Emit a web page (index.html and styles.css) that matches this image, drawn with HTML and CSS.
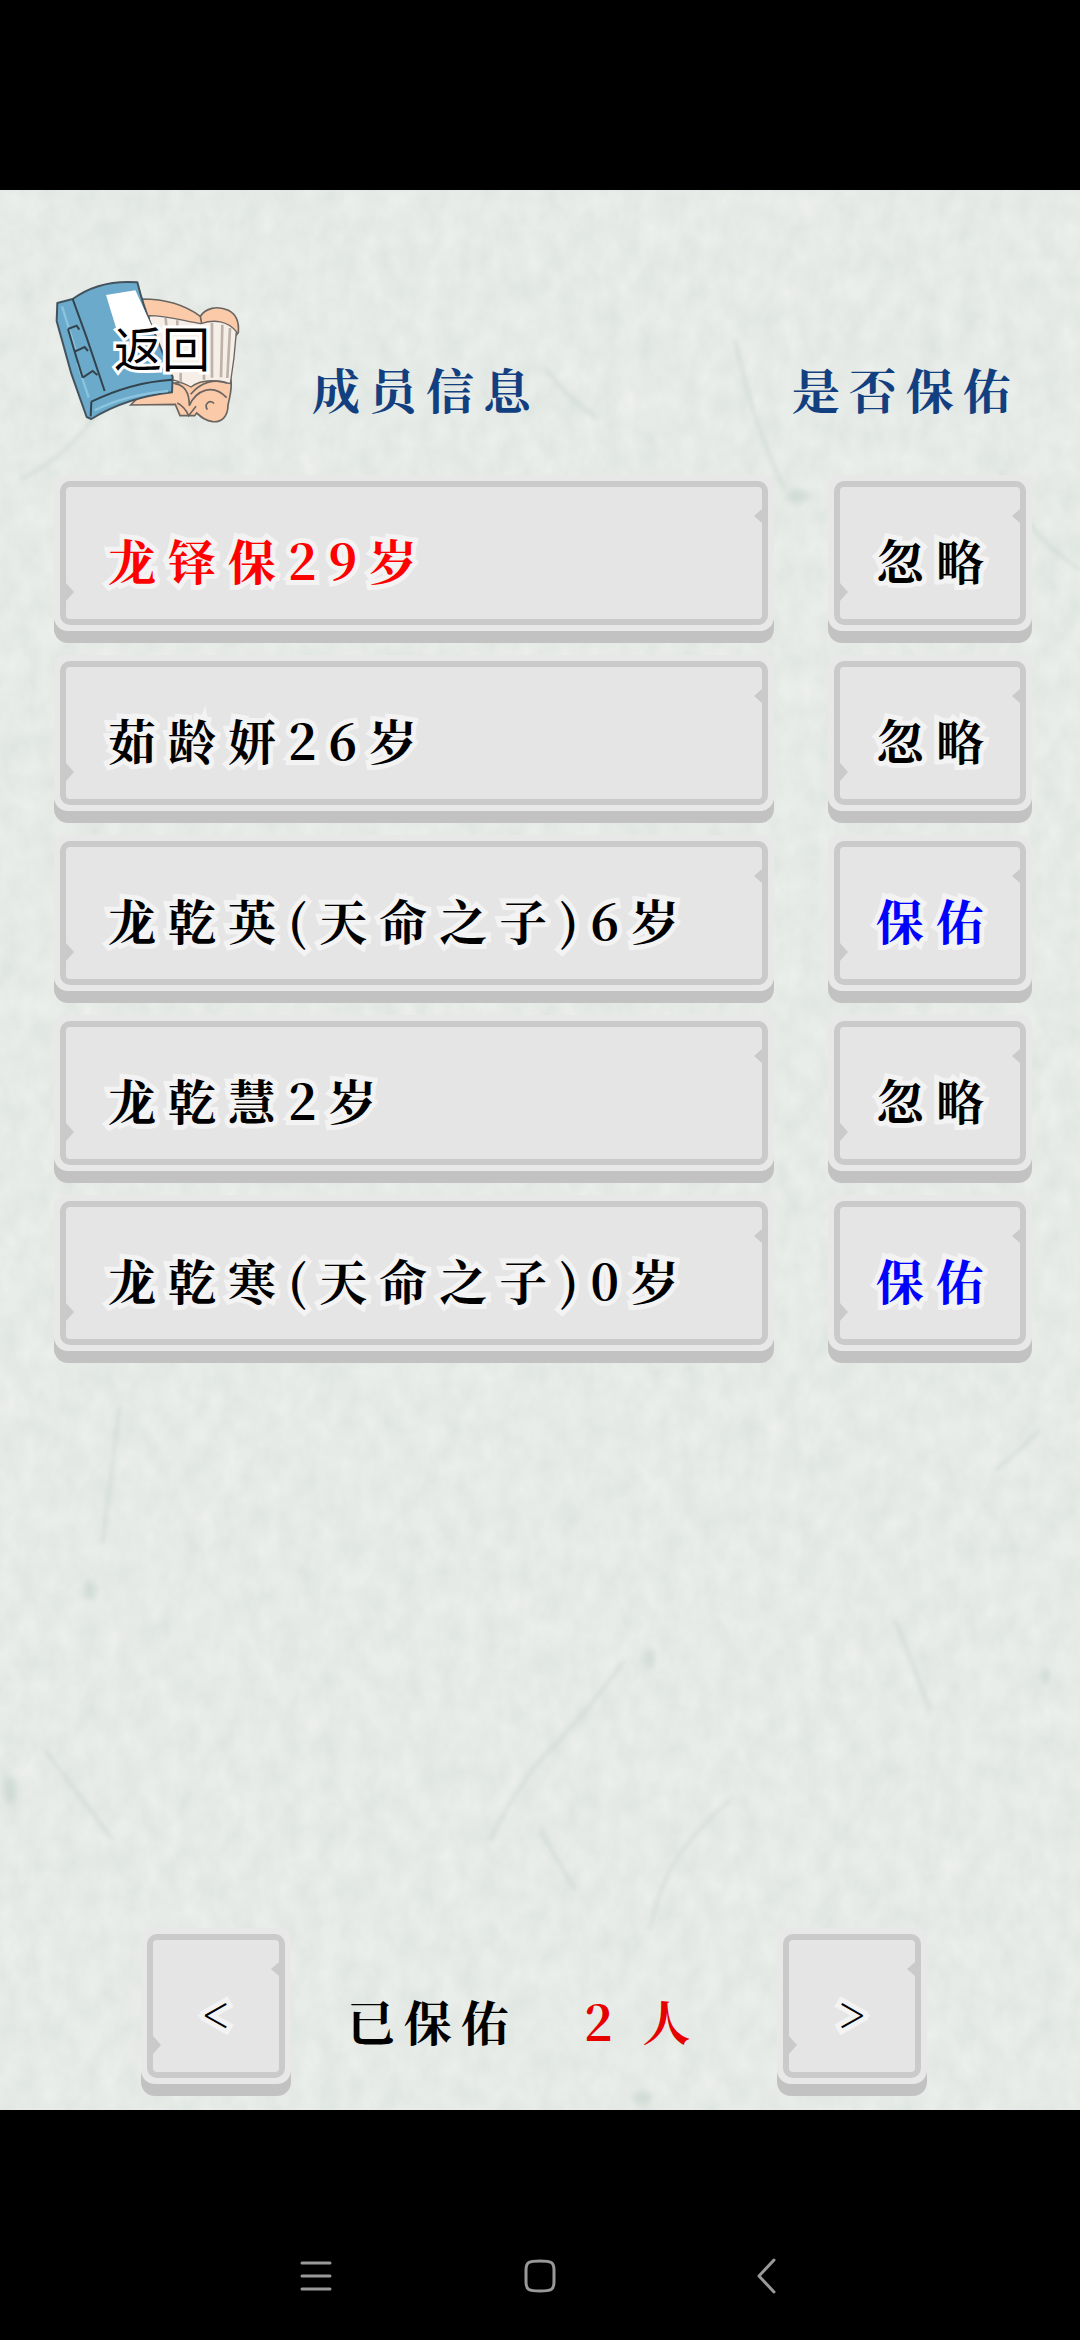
FILE: index.html
```html
<!DOCTYPE html>
<html lang="zh-CN">
<head>
    <meta charset="UTF-8">
    <meta name="viewport" content="width=device-width, initial-scale=1.0">
    <title>成员信息</title>
    <link rel="stylesheet" href="styles.css">
</head>
<body>
    <main class="game">
        <svg class="paper" aria-hidden="true">
            <filter id="grain" x="0" y="0" width="100%" height="100%" color-interpolation-filters="sRGB">
                <feTurbulence type="fractalNoise" baseFrequency="0.05 0.035" numOctaves="3" seed="8"/>
                <feColorMatrix values="0.07 0 0 0 0.865  0.055 0 0 0 0.892  0.06 0 0 0 0.873  0 0 0 0 1"/>
            </filter>
            <rect width="100%" height="100%" filter="url(#grain)"/>
            <g class="fibres">
                <path d="M545 178q20 28 52 50M700 370q30 46 72 80M1000 280q20 60 80 100M20 290q60-30 90-90"/>
                <path d="M120 1215q-8 60-18 140M625 1470q-45 60-75 90t-60 90M730 1610q-45 40-60 70t-20 60M45 1560l68 90M895 1430q20 50 35 90M540 1640l35 60"/>
                <path d="M1040 1240q-30 30-45 40M785 300q-30-60-50-150"/>
            </g>
            <g class="specks">
                <ellipse cx="90" cy="1400" rx="6" ry="10"/>
                <ellipse cx="10" cy="1600" rx="7" ry="14"/>
                <ellipse cx="650" cy="1468" rx="5" ry="10"/>
                <ellipse cx="798" cy="306" rx="12" ry="7"/>
                <ellipse cx="642" cy="1908" rx="10" ry="7"/>
                <ellipse cx="1045" cy="1486" rx="5" ry="8"/>
            </g>
        </svg>

        <header class="top">
            <button class="back" type="button">
                <svg viewBox="70 55 564 441" aria-hidden="true">
                    <!-- open scroll -->
                    <path fill="#fbcba9" stroke="#6b6561" stroke-width="5" d="M335 118c60 0 120 12 174 52 15-24 50-34 84-18 28 14 32 42 30 66l-18 24-270-60zM300 436l60-60 240-20c6 30-2 50-8 80 0 36-20 52-46 50-20-2-32-12-48-26l-6 8h-44l-14-34z"/>
                    <path fill="#f6efe8" stroke="#6b6561" stroke-width="4" d="M355 168c60 0 110 18 156 24 40-14 80-8 106 24-4 60-10 108-18 156-50-14-90-12-118 10-40-20-70-30-110-20z"/>
                    <path fill="none" stroke="#bdb3ab" stroke-width="8" d="M405 175l2 24M440 182v26M544 190v164M575 195l-4 158M598 205l-8 150M450 340v28M520 340v20"/>
                    <path fill="none" stroke="#6b6561" stroke-width="5" d="M509 170l4 22M432 372c30 4 44 28 44 66 20-46 70-68 112-24M480 404c30-36 70-48 110-34M550 432c-8-14-32-2-20 18M440 430c16 8 26 20 34 38l22-28"/>
                    <!-- blue book -->
                    <path fill="#6baaca" stroke="#43535d" stroke-width="6" stroke-linejoin="round" d="M80 130l46-12c50-36 116-56 194-50 10 40 24 86 40 124l66 160-2 46c-90 10-170 36-242 80l-14-6-46-130-44-158z"/>
                    <path fill="#fff" d="M226 106l88-14 60 130-112 2z"/>
                    <path fill="none" stroke="#8bc4df" stroke-width="7" d="M94 140l40 128M140 310l34 104M192 452c60-30 130-50 220-58"/>
                    <path fill="none" stroke="#33434d" stroke-width="6" d="M126 118l42 116 54 160M112 208l26-10 8 12M132 276l30-14 10 12M156 354l30-20 14 12M112 208l20 68 24 78M182 426c70-34 150-60 242-66M182 426l-2 44"/>
                </svg>
                <span class="back-text">返回</span>
            </button>
            <h1 class="title">成员信息</h1>
            <h2 class="title">是否保佑</h2>
        </header>

        <ul class="members">
            <li class="member">
                <button class="plank wide" type="button"><span class="face"><span class="label red">龙铎保29岁</span></span></button>
                <button class="plank" type="button"><span class="face"><span class="label">忽略</span></span></button>
            </li>
            <li class="member">
                <button class="plank wide" type="button"><span class="face"><span class="label">茹龄妍26岁</span></span></button>
                <button class="plank" type="button"><span class="face"><span class="label">忽略</span></span></button>
            </li>
            <li class="member">
                <button class="plank wide" type="button"><span class="face"><span class="label">龙乾英(天命之子)6岁</span></span></button>
                <button class="plank" type="button"><span class="face"><span class="label blue">保佑</span></span></button>
            </li>
            <li class="member">
                <button class="plank wide" type="button"><span class="face"><span class="label">龙乾慧2岁</span></span></button>
                <button class="plank" type="button"><span class="face"><span class="label">忽略</span></span></button>
            </li>
            <li class="member">
                <button class="plank wide" type="button"><span class="face"><span class="label">龙乾寒(天命之子)0岁</span></span></button>
                <button class="plank" type="button"><span class="face"><span class="label blue">保佑</span></span></button>
            </li>
        </ul>

        <footer class="pager">
            <button class="plank arrow" type="button" aria-label="上一页"><span class="face"><span class="label">&lt;</span></span></button>
            <p class="total"><span>已保佑</span><span class="count">2 人</span></p>
            <button class="plank arrow" type="button" aria-label="下一页"><span class="face"><span class="label">&gt;</span></span></button>
        </footer>
    </main>

    <nav class="system-bar">
        <button type="button" aria-label="菜单">
            <svg viewBox="0 0 32 36"><path d="M2 5h28M2 18h28M2 31h28"/></svg>
        </button>
        <button type="button" aria-label="主屏幕">
            <svg viewBox="0 0 32 36"><path d="M16 3c11 0 14 1 14 9v12c0 8-3 9-14 9S2 32 2 24V12c0-8 3-9 14-9z"/></svg>
        </button>
        <button type="button" aria-label="返回">
            <svg viewBox="0 0 32 36"><path d="M26 2L11 18l15 16"/></svg>
        </button>
    </nav>
</body>
</html>
```
FILE: styles.css
```css
* {
    box-sizing: border-box;
}
body {
    margin: 0;
    padding-top: 190px;
    min-height: 100vh;
    display: flex;
    flex-direction: column;
    background-color: #000;
    color: #000;
    font-family: "Noto Serif CJK SC", "Liberation Serif", "Noto Sans CJK SC", serif;
    font-size: 48px;
    font-weight: 700;
    line-height: 72px;
}
button {
    margin: 0;
    padding: 0;
    border: none;
    background: none;
    color: inherit;
    font: inherit;
    cursor: pointer;
}
.game {
    position: relative;
    flex: 1;
    display: flex;
    flex-direction: column;
    padding: 88px 48px 14px 54px;
    background-color: #e4eae6;
}
.game > * {
    position: relative;
}
/* rice paper texture */
.game > .paper {
    position: absolute;
    top: 0;
    left: 0;
    width: 100%;
    height: 100%;
}
.fibres {
    fill: none;
    stroke: #c9d5cf;
    stroke-width: 4;
    opacity: 0.5;
    filter: blur(2px);
}
.specks {
    fill: #c4d2cb;
    opacity: 0.6;
    filter: blur(3px);
}

.top {
    display: flex;
    align-items: flex-end;
    padding-right: 12px;
    margin-bottom: 50px;
}
.back {
    position: relative;
    width: 188px;
    margin-right: 70px;
}
.back svg {
    display: block;
    width: 100%;
}
.back-text {
    position: absolute;
    top: 32px;
    left: 60px;
    font-family: "Noto Sans CJK SC", sans-serif;
    font-weight: 400;
    white-space: nowrap;
    -webkit-text-stroke: 6px #fff;
    paint-order: stroke fill;
}
.title {
    margin: 0;
    color: #123f7f;
    font-size: 48px;
    letter-spacing: 9px;
    white-space: nowrap;
}
.title:last-child {
    margin-left: auto;
}

.members {
    display: flex;
    flex-direction: column;
    gap: 12px;
    margin: 0;
    padding: 0;
    list-style: none;
}
.member {
    display: grid;
    grid-template-columns: 720fr 204fr;
    gap: 54px;
}

/* stone button: dark foot, light face, grey frame */
.plank {
    padding-bottom: 12px;
    border-radius: 0 0 14px 14px;
    background: linear-gradient(#c2c2c2, #c2c2c2) bottom / 100% 24px no-repeat;
    letter-spacing: 12px;
}
.face {
    display: block;
    padding: 6px;
    border-radius: 10px 10px 14px 14px;
    background-color: #e8e8e8;
}
.label {
    position: relative;
    display: flex;
    align-items: center;
    justify-content: center;
    height: 144px;
    padding: 14px 0 0 12px;
    border: 6px solid #cacaca;
    border-radius: 10px;
    background-color: #e5e5e5;
    white-space: nowrap;
    -webkit-text-stroke: 10px #f3f3f3;
    paint-order: stroke fill;
}
.wide .label {
    justify-content: flex-start;
    padding-left: 42px;
}
.label::before,
.label::after {
    content: "";
    position: absolute;
    width: 8px;
    background-color: #cacaca;
}
.label::before {
    left: 0;
    bottom: 18px;
    height: 18px;
    clip-path: polygon(0 0, 100% 50%, 50% 75%, 0 100%);
}
.label::after {
    right: 0;
    top: 22px;
    height: 14px;
    clip-path: polygon(100% 0, 0 50%, 50% 75%, 100% 100%);
}
.red {
    color: #f00;
}
.blue {
    color: #00f;
}

.pager {
    display: flex;
    align-items: center;
    margin-top: auto;
    padding: 0 105px 0 87px;
}
.arrow {
    width: 150px;
}
.arrow .label {
    font-weight: 400;
}
.arrow:last-child {
    margin-left: auto;
}
.total {
    display: flex;
    gap: 66px;
    margin: 0 0 0 56px;
    padding-top: 18px;
    letter-spacing: 9px;
    white-space: nowrap;
}
.count {
    color: #e60000;
}

.system-bar {
    display: flex;
    align-items: flex-start;
    justify-content: center;
    gap: 192px;
    height: 230px;
    padding-top: 148px;
}
.system-bar button {
    width: 32px;
}
.system-bar svg {
    display: block;
    width: 32px;
    fill: none;
    stroke: #999;
    stroke-width: 3;
    stroke-linecap: round;
    stroke-linejoin: round;
}
```
